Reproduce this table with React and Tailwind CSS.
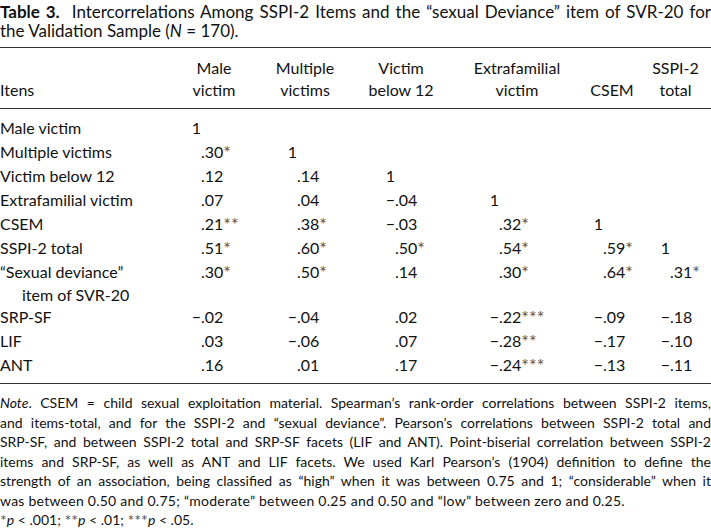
import React from 'react'

const cols = ['Male victim', 'Multiple victims', 'Victim below 12', 'Extrafamilial victim', 'CSEM', 'SSPI-2 total']

const rows = [
    { label: 'Male victim', vals: ['1'] },
    { label: 'Multiple victims', vals: ['.30*', '1'] },
    { label: 'Victim below 12', vals: ['.12', '.14', '1'] },
    { label: 'Extrafamilial victim', vals: ['.07', '.04', '−.04', '1'] },
    { label: 'CSEM', vals: ['.21**', '.38*', '−.03', '.32*', '1'] },
    { label: 'SSPI-2 total', vals: ['.51*', '.60*', '.50*', '.54*', '.59*', '1'] },
    { label: '“Sexual deviance”', sub: 'item of SVR-20', vals: ['.30*', '.50*', '.14', '.30*', '.64*', '.31*'] },
    { label: 'SRP-SF', vals: ['−.02', '−.04', '.02', '−.22***', '−.09', '−.18'] },
    { label: 'LIF', vals: ['.03', '−.06', '.07', '−.28**', '−.17', '−.10'] },
    { label: 'ANT', vals: ['.16', '.01', '.17', '−.24***', '−.13', '−.11'] },
]

// asterisks sit a little high and lighter, like the journal setting
const Stars = ({ n, className = 'text-[18px]' }) => (
    <span className={`${className} leading-none text-[#555] relative top-[1px]`}>{'*'.repeat(n)}</span>
)

function Value({ v }) {
    if (!v) return <div />
    const neg = v.startsWith('−')
    const stars = (v.match(/\*/g) || []).length
    const main = v.replace(/[−*]/g, '')
    const isOne = main === '1'
    return (
        <div className="whitespace-nowrap">
            <span className="inline-block w-[12px] text-right">{neg ? '−' : isOne ? '1' : ''}</span>
            {!isOne && <span>{main}</span>}
            {stars > 0 && <Stars n={stars} />}
        </div>
    )
}

const noteLines = [
    <><i>Note</i>. CSEM = child sexual exploitation material. Spearman’s rank-order correlations between SSPI-2 items,</>,
    <>and items-total, and for the SSPI-2 and “sexual deviance”. Pearson’s correlations between SSPI-2 total and</>,
    <>SRP-SF, and between SSPI-2 total and SRP-SF facets (LIF and ANT). Point-biserial correlation between SSPI-2</>,
    <>items and SRP-SF, as well as ANT and LIF facets. We used Karl Pearson’s (1904) definition to define the</>,
    <>strength of an association, being classified as “high” when it was between 0.75 and 1; “considerable” when it</>,
]

export default function App() {
    return (
        <div className="w-[711px] h-[531px] bg-white text-[#111] font-['Lato',sans-serif] overflow-hidden">
            {/* caption */}
            <div className="pt-[2px] text-[17px] leading-[19px]">
                <p className="text-justify [text-align-last:justify] whitespace-nowrap">
                    <b>Table 3.</b>&nbsp; Intercorrelations Among SSPI-2 Items and the “sexual Deviance” item of SVR-20 for
                </p>
                <p>the Validation Sample (<i>N</i> = 170).</p>
            </div>

            {/* table */}
            <div className="mt-[7px] border-t border-b border-[#333] text-[16px]">
                <div className="grid grid-cols-[170px_88px_94px_98px_134px_56px_71px] items-end pt-[9px] pb-[7px] leading-[22px] border-b border-[#333]">
                    <div>Itens</div>
                    {cols.map((c) => {
                        const parts = c === 'CSEM' ? ['CSEM'] : [c.slice(0, c.indexOf(' ')), c.slice(c.indexOf(' ') + 1)]
                        return (
                            <div key={c} className="text-center">
                                {parts.map((p) => (
                                    <div key={p}>{p}</div>
                                ))}
                            </div>
                        )
                    })}
                </div>
                <div className="pt-[7px] pb-[6px] leading-[24px]">
                    {rows.map((r) => (
                        <div key={r.label} className="grid grid-cols-[189px_96px_98px_104px_104px_67px_53px]">
                            <div>
                                <div>{r.label}</div>
                                {r.sub && <div className="pl-[22px] leading-[21px]">{r.sub}</div>}
                            </div>
                            {[0, 1, 2, 3, 4, 5].map((i) => (
                                <Value key={i} v={r.vals[i]} />
                            ))}
                        </div>
                    ))}
                </div>
            </div>

            {/* note */}
            <div className="pt-[9px] text-[14px] leading-[19.5px]">
                {noteLines.map((l, i) => (
                    <p key={i} className="text-justify [text-align-last:justify] whitespace-nowrap">{l}</p>
                ))}
                <p className="tracking-[0.25px]">was between 0.50 and 0.75; “moderate” between 0.25 and 0.50 and “low” between zero and 0.25.</p>
                <p>
                    <Stars n={1} className="text-[16px]" /><i>p</i> &lt; .001; <Stars n={2} className="text-[16px]" /><i>p</i> &lt; .01; <Stars n={3} className="text-[16px]" /><i>p</i> &lt; .05.
                </p>
            </div>
        </div>
    )
}
